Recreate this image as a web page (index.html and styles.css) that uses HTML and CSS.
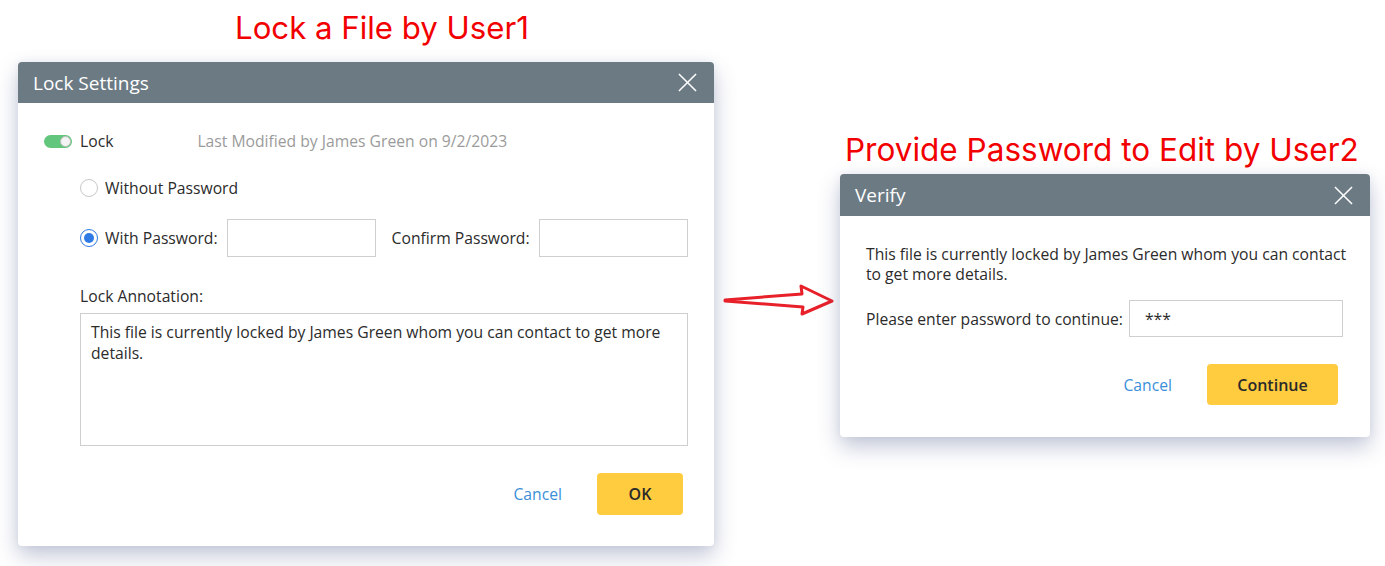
FILE: index.html
```html
<!DOCTYPE html>
<html>
<head>
<meta charset="utf-8">
<link rel="stylesheet" href="styles.css">
</head>
<body>
<div class="stage">
  <div class="col-left">
    <h1 class="caption caption-left">Lock a File by User1</h1>
    <div class="dialog dialog-lock">
      <div class="dlg-head">
        <span class="dlg-title">Lock Settings</span>
        <svg class="close" viewBox="0 0 20 20" width="20" height="20"><path d="M1 1L19 19M19 1L1 19" stroke="#fff" stroke-width="1.6" fill="none"/></svg>
      </div>
      <div class="dlg-body lock-body">
        <div class="row row-lock">
          <span class="toggle"><span class="knob"></span></span>
          <span class="lock-label">Lock</span>
          <span class="modified">Last Modified by James Green on 9/2/2023</span>
        </div>
        <div class="indent">
          <div class="row row-without">
            <span class="radio"></span>
            <span>Without Password</span>
          </div>
          <div class="row row-with">
            <span class="radio checked"></span>
            <span>With Password:</span>
            <span class="field field-pw"></span>
            <span class="confirm-label">Confirm Password:</span>
            <span class="field field-pw field-confirm"></span>
          </div>
          <div class="row row-annot">Lock Annotation:</div>
          <div class="textarea">This file is currently locked by James Green whom you can contact to get more details.</div>
          <div class="actions actions-lock">
            <span class="link">Cancel</span>
            <span class="btn btn-ok">OK</span>
          </div>
        </div>
      </div>
    </div>
  </div>
  <div class="col-mid">
    <svg class="arrow" viewBox="0 0 114 36" width="114" height="36"><path d="M3 17 L80 11 L79 3 L110 18 L80 31 L81 24 L3 18 Z" stroke="#e8202a" stroke-width="3" stroke-linejoin="round" fill="#fff"/></svg>
  </div>
  <div class="col-right">
    <h1 class="caption caption-right">Provide Password to Edit by User2</h1>
    <div class="dialog dialog-verify">
      <div class="dlg-head">
        <span class="dlg-title">Verify</span>
        <svg class="close" viewBox="0 0 20 20" width="20" height="20"><path d="M1 1L19 19M19 1L1 19" stroke="#fff" stroke-width="1.6" fill="none"/></svg>
      </div>
      <div class="dlg-body verify-body">
        <p class="msg">This file is currently locked by James Green whom you can contact to get more details.</p>
        <div class="row row-enter">
          <span>Please enter password to continue:</span>
          <span class="field field-enter">***</span>
        </div>
        <div class="actions actions-verify">
          <span class="link">Cancel</span>
          <span class="btn btn-continue">Continue</span>
        </div>
      </div>
    </div>
  </div>
</div>
</body>
</html>
```

FILE: styles.css
```css
html, body {
  margin: 0;
  padding: 0;
  background: #ffffff;
}
body {
  font-family: "Open Sans", "Liberation Sans", sans-serif;
  font-size: 15.7px;
  color: #2b2b2b;
  min-height: 566px;
}
.stage {
  display: flex;
  align-items: flex-start;
  padding-left: 18px;
  padding-bottom: 20px;
}
.col-left {
  width: 696px;
  display: flex;
  flex-direction: column;
}
.col-mid {
  width: 126px;
  display: flex;
  justify-content: flex-start;
  padding-top: 283px;
}
.arrow {
  margin-left: 8px;
  display: block;
}
.col-right {
  width: 530px;
  display: flex;
  flex-direction: column;
  padding-top: 130px;
}
.caption {
  font-family: "Inter", "Roboto", sans-serif;
  font-weight: 400;
  font-size: 31.2px;
  line-height: 40px;
  color: #f20000;
  margin: 0;
  white-space: nowrap;
}
.caption-right {
  font-size: 31.5px;
}
.caption-left {
  margin: 8px 0 14px 217px;
}
.caption-right {
  margin: 0 0 4px 5px;
}
.dialog {
  background: #fff;
  border-radius: 4px;
  box-shadow: 0 10px 22px rgba(70, 85, 135, 0.32), 0 0 8px rgba(70, 85, 135, 0.08);
  overflow: hidden;
}
.dlg-head {
  height: 41px;
  background: #6c7a84;
  display: flex;
  align-items: center;
  justify-content: space-between;
  padding: 0 17px 0 15px;
}
.dialog-verify .dlg-head {
  height: 42px;
}
.dlg-title {
  color: #fff;
  font-size: 19px;
  font-weight: 400;
}
.close {
  display: block;
  width: 19px;
  height: 19px;
}
.dlg-body {
  padding: 0 26px;
}
.lock-body {
  padding-top: 28px;
  padding-bottom: 31px;
}
.row {
  display: flex;
  align-items: center;
  height: 20px;
  white-space: nowrap;
}
.toggle {
  width: 28px;
  height: 13px;
  border-radius: 7px;
  background: #62c77c;
  position: relative;
  box-sizing: border-box;
  flex: none;
}
.knob {
  position: absolute;
  right: 1px;
  top: 1px;
  width: 11px;
  height: 11px;
  border-radius: 50%;
  background: #f4f4f4;
  box-sizing: border-box;
  border: 1px solid #bdbdbd;
}
.lock-label {
  margin-left: 8px;
}
.modified {
  margin-left: 84px;
  color: #9b9b9b;
}
.indent {
  padding-left: 36px;
}
.row-without {
  margin-top: 27px;
}
.radio {
  width: 18px;
  height: 18px;
  box-sizing: border-box;
  border: 1px solid #c8c8c8;
  border-radius: 50%;
  margin-right: 7px;
  position: relative;
  background: #fff;
  flex: none;
}
.radio.checked {
  border: 1.5px solid #2f7ae5;
}
.radio.checked::after {
  content: "";
  position: absolute;
  left: 2.5px;
  top: 2.5px;
  width: 10px;
  height: 10px;
  border-radius: 50%;
  background: #2f7ae5;
}
.row-with {
  margin-top: 21px;
  height: 38px;
}
.field {
  box-sizing: border-box;
  border: 1px solid #cfcfcf;
  background: #fff;
  display: flex;
  align-items: center;
  flex: none;
}
.field-pw {
  width: 149px;
  height: 38px;
  margin-left: 9px;
}
.confirm-label {
  margin-left: 16px;
}
.field-confirm {
  margin-left: 9px;
}
.row-annot {
  margin-top: 29px;
}
.textarea {
  margin-top: 7px;
  width: 608px;
  height: 133px;
  box-sizing: border-box;
  border: 1px solid #cfcfcf;
  padding: 8px 10px;
  line-height: 21px;
}
.actions {
  display: flex;
  justify-content: flex-end;
  align-items: center;
}
.actions-lock {
  margin-top: 27px;
  width: 603px;
}
.link {
  color: #3b8fd9;
}
.btn {
  background: #ffcb3f;
  border-radius: 4px;
  font-weight: 600;
  font-size: 16px;
  color: #2a2a2a;
  display: flex;
  align-items: center;
  justify-content: center;
}
.btn-ok {
  width: 86px;
  height: 42px;
  margin-left: 35px;
}
.verify-body {
  padding-top: 28px;
  padding-bottom: 32px;
}
.msg {
  margin: 0;
  line-height: 20px;
  width: 484px;
}
.row-enter {
  margin-top: 16px;
  height: 37px;
}
.field-enter {
  width: 214px;
  height: 37px;
  margin-left: 6px;
  padding-left: 15px;
}
.actions-verify {
  margin-top: 27px;
  padding-right: 6px;
}
.btn-continue {
  width: 131px;
  height: 41px;
  margin-left: 35px;
}
```
